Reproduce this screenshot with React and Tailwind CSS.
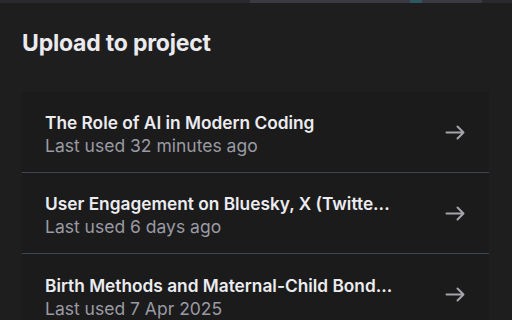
const projects = [
  { title: "The Role of AI in Modern Coding", used: "Last used 32 minutes ago" },
  { title: "User Engagement on Bluesky, X (Twitte...", used: "Last used 6 days ago" },
  { title: "Birth Methods and Maternal-Child Bond...", used: "Last used 7 Apr 2025" },
];

function Arrow() {
  return (
    <svg width="20" height="15" viewBox="0 0 20 15" fill="none" className="shrink-0 text-[#a4a4ac]">
      <path
        d="M1.5 7.5H18.5M12.5 1.5L18.5 7.5L12.5 13.5"
        stroke="currentColor"
        strokeWidth="2"
        strokeLinecap="round"
        strokeLinejoin="round"
      />
    </svg>
  );
}

export default function App() {
  return (
    <div
      className="w-[512px] h-[320px] overflow-hidden bg-[#1e1e1f] flex flex-col"
      style={{ fontFamily: "Inter, 'Liberation Sans', sans-serif" }}
    >
      {/* window edge above the sheet */}
      <div className="flex h-[3px] shrink-0">
        <div className="w-[250px] bg-[#2a2a2e]" />
        <div className="w-[160px] bg-[#3a3a42]" />
        <div className="w-[12px] bg-[#2f5763]" />
        <div className="w-[60px] bg-[#3a3a42]" />
        <div className="flex-1 bg-[#2a2a2e]" />
      </div>

      <h1 className="px-[22px] pt-[25px] text-[23px] font-bold text-[#ebebef] leading-[30px] tracking-[-0.2px]">
        Upload to project
      </h1>

      <div className="mx-[22px] w-[467px] mt-[34px] flex flex-col">
        {projects.map((p, i) => (
          <div
            key={p.title}
            className={`flex items-center gap-3 bg-[#1b1b1c] pl-[23px] pr-[24px] h-[81px] ${
              i < projects.length - 1 ? "border-b border-[#3b4656]" : ""
            }`}
          >
            <div className="flex-1 min-w-0 pt-[4px]">
              <p className="text-[17.3px] font-semibold text-[#ececf0] leading-[23px] whitespace-nowrap">
                {p.title}
              </p>
              <p className="text-[17.5px] text-[#9a9aa3] leading-[23px] whitespace-nowrap">{p.used}</p>
            </div>
            <Arrow />
          </div>
        ))}
      </div>
    </div>
  );
}
